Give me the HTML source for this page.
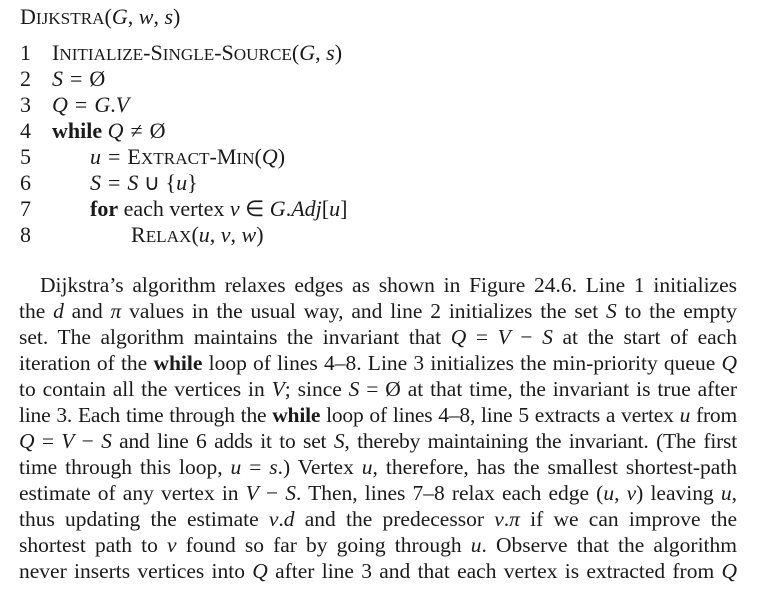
<!DOCTYPE html>
<html><head><meta charset="utf-8"><style>
body{margin:0;background:#fff;width:767px;height:614px;overflow:hidden;position:relative;font-family:"Liberation Serif","Times New Roman","DejaVu Serif",serif;font-size:21.5px;color:#1a1a1a}
.l{position:absolute;white-space:nowrap;line-height:26px;font-family:"Liberation Serif",serif;font-size:22px}
.p{position:absolute;left:19px;width:718px;line-height:26px;text-align:justify;text-align-last:justify;white-space:nowrap;font-family:"Liberation Serif",serif}
.t{letter-spacing:-0.2px;word-spacing:-1px}
.s{font-size:0.78em}
i{font-style:italic;font-family:"Liberation Serif",serif}
.n{position:absolute;left:20px}
.e{padding:0 7px}
</style></head><body>
<div class="l" style="left:20px;top:4px">D<span class="s">IJKSTRA</span>(<i>G</i>, <i>w</i>, <i>s</i>)</div>
<div class="l" style="left:0;top:40px;width:450px"><span class="n">1</span><span style="position:absolute;left:52px">I<span class="s">NITIALIZE</span>-S<span class="s">INGLE</span>-S<span class="s">OURCE</span>(<i>G</i>, <i>s</i>)</span></div>
<div class="l" style="left:0;top:66px;width:450px"><span class="n">2</span><span style="position:absolute;left:52px"><i>S</i><span class="e">=</span>Ø</span></div>
<div class="l" style="left:0;top:92px;width:450px"><span class="n">3</span><span style="position:absolute;left:52px"><i>Q</i><span class="e">=</span><i>G</i>.<i>V</i></span></div>
<div class="l" style="left:0;top:118px;width:450px"><span class="n">4</span><span style="position:absolute;left:52px"><b>while</b> <i>Q</i><span class="e">≠</span>Ø</span></div>
<div class="l" style="left:0;top:144px;width:450px"><span class="n">5</span><span style="position:absolute;left:90px"><i>u</i><span class="e">=</span>E<span class="s">XTRACT</span>-M<span class="s">IN</span>(<i>Q</i>)</span></div>
<div class="l" style="left:0;top:170px;width:450px"><span class="n">6</span><span style="position:absolute;left:90px"><i>S</i><span class="e">=</span><i>S</i> ∪ {<i>u</i>}</span></div>
<div class="l" style="left:0;top:196px;width:450px"><span class="n">7</span><span style="position:absolute;left:90px"><b>for</b> each vertex <i>v</i> ∈ <i>G</i>.<i>Adj</i>[<i>u</i>]</span></div>
<div class="l" style="left:0;top:222px;width:450px"><span class="n">8</span><span style="position:absolute;left:131px">R<span class="s">ELAX</span>(<i>u</i>, <i>v</i>, <i>w</i>)</span></div>

<div class="p" style="top:272px;left:40px;width:697px">Dijkstra’s algorithm relaxes edges as shown in Figure 24.6. Line 1 initializes</div>
<div class="p" style="top:298px">the <i>d</i> and <i>π</i> values in the usual way, and line 2 initializes the set <i>S</i> to the empty</div>
<div class="p" style="top:324px">set. The algorithm maintains the invariant that <i>Q</i> = <i>V</i> − <i>S</i> at the start of each</div>
<div class="p" style="top:350px">iteration of the <b>while</b> loop of lines 4–8. Line 3 initializes the min-priority queue <i>Q</i></div>
<div class="p" style="top:376px">to contain all the vertices in <i>V</i>; since <i>S</i> = Ø at that time, the invariant is true after</div>
<div class="p t" style="top:402px">line 3. Each time through the <b>while</b> loop of lines 4–8, line 5 extracts a vertex <i>u</i> from</div>
<div class="p t" style="top:428px"><i>Q</i> = <i>V</i> − <i>S</i> and line 6 adds it to set <i>S</i>, thereby maintaining the invariant. (The first</div>
<div class="p" style="top:454px">time through this loop, <i>u</i> = <i>s</i>.) Vertex <i>u</i>, therefore, has the smallest shortest-path</div>
<div class="p" style="top:480px">estimate of any vertex in <i>V</i> − <i>S</i>. Then, lines 7–8 relax each edge (<i>u</i>, <i>v</i>) leaving <i>u</i>,</div>
<div class="p" style="top:506px">thus updating the estimate <i>v</i>.<i>d</i> and the predecessor <i>v</i>.<i>π</i> if we can improve the</div>
<div class="p" style="top:532px">shortest path to <i>v</i> found so far by going through <i>u</i>. Observe that the algorithm</div>
<div class="p" style="top:558px">never inserts vertices into <i>Q</i> after line 3 and that each vertex is extracted from <i>Q</i></div>
</body></html>
